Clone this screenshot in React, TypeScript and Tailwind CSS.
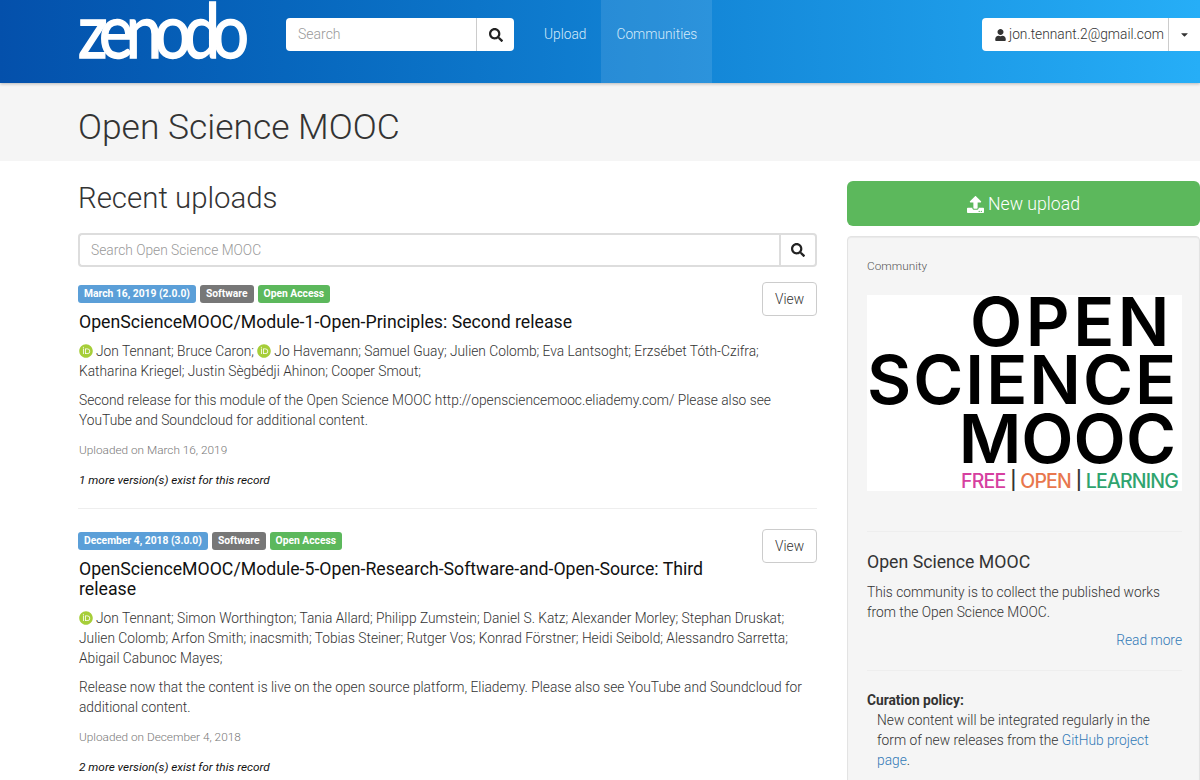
import { FaCaretDown, FaOrcid, FaSearch, FaUpload, FaUser } from "react-icons/fa"

const roboto = "font-['Roboto',sans-serif]"

function Orcid() {
  return <FaOrcid className="inline-block align-[-2px] mr-[3px] w-[14px] h-[14px] text-[#a6ce39]" />
}

function Label({ color, children }: { color: string; children: React.ReactNode }) {
  return (
    <span className={`${color} h-[18px] px-[6px] rounded-[3px] text-white text-[10.3px] font-bold leading-[18px]`}>
      {children}
    </span>
  )
}

function Record({
  date,
  title,
  authors,
  description,
  uploaded,
  versions,
}: {
  date: string
  title: string
  authors: React.ReactNode
  description: string
  uploaded: string
  versions: string
}) {
  return (
    <div>
      <div className="flex items-start">
        <div className="flex-1 pt-[3px]">
          <div className="flex gap-[4px]">
            <Label color="bg-[#5b9fd8]">{date}</Label>
            <Label color="bg-[#777777]">Software</Label>
            <Label color="bg-[#5cb85c]">Open Access</Label>
          </div>
          <h4 className="mt-[9px] pl-px text-[17.7px] leading-[20px] font-normal text-[#111]">{title}</h4>
        </div>
        <button className="w-[55px] h-[34px] border border-[#ccc] rounded-[4px] text-[13.75px] font-light text-[#333] bg-white shrink-0">
          View
        </button>
      </div>
      <div className="pl-px">
        <p className="mt-[9px] text-[13.75px] leading-[20px] font-light text-[#333]">{authors}</p>
        <p className="mt-[9px] text-[13.75px] leading-[20px] font-light text-[#333]">{description}</p>
        <p className="mt-[10px] text-[11.8px] leading-[20px] font-light text-[#777]">{uploaded}</p>
        <p className="mt-[10px] text-[11.8px] leading-[20px] font-normal italic text-[#111]">{versions}</p>
      </div>
    </div>
  )
}

export default function App() {
  return (
    <div className={`${roboto} w-[1200px] h-[780px] overflow-hidden bg-white text-[#333]`}>
      <header className="h-[83px] bg-gradient-to-r from-[#0450ab] to-[#26aef7] flex shadow-[0_1px_3px_rgba(0,0,0,0.25)] relative">
        <div className="w-[286px] shrink-0 pl-[78px] overflow-hidden">
          <span className="block font-['Lato',sans-serif] font-normal text-white [-webkit-text-stroke:1.5px_white] text-[75px] leading-[59px] tracking-[-9px] origin-left scale-x-[0.87] whitespace-nowrap">
            zenodo
          </span>
        </div>
        <div className="flex h-[33px] mt-[18px] w-[228px]">
          <div className="flex-1 bg-white rounded-l-[4px] px-[12px] text-[14px] leading-[33px] font-light text-[#999]">Search</div>
          <div className="w-[38px] bg-white rounded-r-[4px] border-l border-[#ccc] flex items-center justify-center text-[#222]">
            <FaSearch className="w-[14px] h-[14px]" />
          </div>
        </div>
        <nav className="flex ml-[15px] text-[13.75px] font-light text-[#d4eafa] leading-[68px]">
          <span className="px-[15px]">Upload</span>
          <span className="px-[15px] bg-white/10">Communities</span>
        </nav>
        <div className="ml-auto flex h-[33px] mt-[18px] w-[218px] bg-white rounded-l-[4px] text-[13.75px] font-light text-[#333] leading-[33px]">
          <div className="flex-1 flex items-center pl-[13px] gap-[3px] border-r border-[#ccc]">
            <FaUser className="w-[11px] h-[12px] text-[#333]" />
            jon.tennant.2@gmail.com
          </div>
          <div className="w-[31px] flex items-center justify-center">
            <FaCaretDown className="w-[11px] h-[11px] text-[#333]" />
          </div>
        </div>
      </header>

      <div className="h-[78px] bg-[#f5f5f5] pl-[78px]">
        <h1 className="text-[35.4px] leading-[88px] font-light text-[#333]">Open Science MOOC</h1>
      </div>

      <main className="flex pl-[78px] pt-[21px]">
        <div className="w-[739px] shrink-0">
          <h2 className="text-[29.4px] leading-[33px] font-light text-[#333]">Recent uploads</h2>
          <div className="flex h-[34px] mt-[18px]">
            <div className="flex-1 border-2 border-r-0 border-[#ddd] rounded-l-[4px] px-[11px] text-[13.75px] leading-[30px] font-light text-[#999]">
              Search Open Science MOOC
            </div>
            <div className="w-[38px] border-2 border-[#ddd] rounded-r-[4px] flex items-center justify-center text-[#222]">
              <FaSearch className="w-[14px] h-[14px]" />
            </div>
          </div>
          <div className="mt-[15px]">
            <Record
              date="March 16, 2019 (2.0.0)"
              title="OpenScienceMOOC/Module-1-Open-Principles: Second release"
              authors={
                <>
                  <Orcid />
                  Jon Tennant; Bruce Caron; <Orcid />
                  Jo Havemann; Samuel Guay; Julien Colomb; Eva Lantsoght; Erzsébet Tóth-Czifra; Katharina Kriegel; Justin Sègbédji Ahinon; Cooper Smout;
                </>
              }
              description="Second release for this module of the Open Science MOOC http://opensciencemooc.eliademy.com/ Please also see YouTube and Soundcloud for additional content."
              uploaded="Uploaded on March 16, 2019"
              versions="1 more version(s) exist for this record"
            />
            <hr className="mt-[18px] mb-[20px] border-[#eee]" />
            <Record
              date="December 4, 2018 (3.0.0)"
              title="OpenScienceMOOC/Module-5-Open-Research-Software-and-Open-Source: Third release"
              authors={
                <>
                  <Orcid />
                  Jon Tennant; Simon Worthington; Tania Allard; Philipp Zumstein; Daniel S. Katz; Alexander Morley; Stephan Druskat; Julien Colomb; Arfon Smith; inacsmith; Tobias Steiner; Rutger Vos; Konrad Förstner; Heidi Seibold; Alessandro Sarretta; Abigail Cabunoc Mayes;
                </>
              }
              description="Release now that the content is live on the open source platform, Eliademy. Please also see YouTube and Soundcloud for additional content."
              uploaded="Uploaded on December 4, 2018"
              versions="2 more version(s) exist for this record"
            />
          </div>
        </div>

        <aside className="w-[353px] -mt-px ml-[30px] shrink-0">
          <button className="w-full h-[45px] pt-px bg-[#5cb85c] rounded-[6px] text-white text-[17.7px] font-light flex items-center justify-center gap-[4px]">
            <FaUpload className="w-[17px] h-[17px]" />
            New upload
          </button>
          <div className="mt-[10px] h-[560px] bg-[#f5f5f5] border border-[#e3e3e3] rounded-[4px] pt-[19px] pl-[19px] pr-[17px] shadow-[inset_0_1px_1px_rgba(0,0,0,0.05)]">
            <p className="text-[11.8px] leading-[20px] font-light text-[#555]">Community</p>
            <div className="mt-[19px] w-[315px] h-[196px] bg-white overflow-hidden text-right font-['Inter',sans-serif] font-semibold text-black text-[68px] leading-[59px] whitespace-nowrap">
              <div className="-mt-[3px] pr-[9px] tracking-[3.5px]">OPEN</div>
              <div className="-mt-px pr-[8px] tracking-[2px]">SCIENCE</div>
              <div className="pr-[6px]">MOOC</div>
              <div className="mt-[3px] pr-[4px] text-[19.5px] leading-[20px] font-medium tracking-[-0.8px]">
                <span className="text-[#d6409f]">FREE</span>
                <span className="text-[#333]"> | </span>
                <span className="text-[#e8774d]">OPEN</span>
                <span className="text-[#333]"> | </span>
                <span className="text-[#2fa46f]">LEARNING</span>
              </div>
            </div>
            <hr className="mt-[40px] border-[#eee]" />
            <h4 className="mt-[20px] text-[17.7px] leading-[20px] font-normal text-[#333]">Open Science MOOC</h4>
            <p className="mt-[10px] text-[13.75px] leading-[20px] font-light text-[#333]">
              This community is to collect the published works from the Open Science MOOC.
            </p>
            <p className="mt-[8px] text-right text-[13.75px] leading-[20px] font-light text-[#337ab7]">Read more</p>
            <hr className="mt-[20px] border-[#eee]" />
            <p className="mt-[19px] text-[13.75px] leading-[20px] font-bold text-[#333]">Curation policy:</p>
            <p className="pl-[10px] pr-[30px] text-[13.75px] leading-[20px] font-light text-[#333]">
              New content will be integrated regularly in the form of new releases from the <span className="text-[#337ab7]">GitHub project page</span>.
            </p>
          </div>
        </aside>
      </main>
    </div>
  )
}
